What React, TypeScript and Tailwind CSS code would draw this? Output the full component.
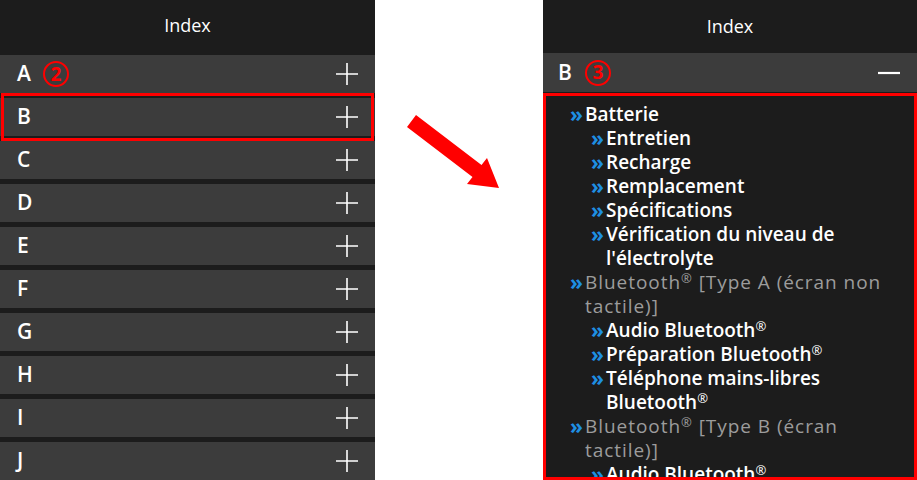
const letters = ["A", "B", "C", "D", "E", "F", "G", "H", "I", "J"];

type Entry = { level: 1 | 2; text: string; reg?: boolean; suffix?: string; muted?: boolean };

const entries: Entry[] = [
  { level: 1, text: "Batterie" },
  { level: 2, text: "Entretien" },
  { level: 2, text: "Recharge" },
  { level: 2, text: "Remplacement" },
  { level: 2, text: "Spécifications" },
  { level: 2, text: "Vérification du niveau de l'électrolyte" },
  { level: 1, text: "Bluetooth", reg: true, suffix: " [Type A (écran non tactile)]", muted: true },
  { level: 2, text: "Audio Bluetooth", reg: true },
  { level: 2, text: "Préparation Bluetooth", reg: true },
  { level: 2, text: "Téléphone mains-libres Bluetooth", reg: true },
  { level: 1, text: "Bluetooth", reg: true, suffix: " [Type B (écran tactile)]", muted: true },
  { level: 2, text: "Audio Bluetooth", reg: true },
];

const font = { fontFamily: "'Open Sans', 'Noto Sans', sans-serif" };

function Circled({ n }: { n: number }) {
  return (
    <span className="flex h-[26px] w-[26px] items-center justify-center rounded-full border-2 border-[#f00] text-[19px] font-bold leading-none text-[#f00]">
      {n}
    </span>
  );
}

function Plus() {
  return (
    <svg width="22" height="22" viewBox="0 0 22 22" className="shrink-0">
      <path d="M11 0v22M0 11h22" stroke="#fff" strokeWidth="1.6" />
    </svg>
  );
}

function Minus() {
  return (
    <svg width="22" height="22" viewBox="0 0 22 22" className="shrink-0">
      <path d="M0 11h22" stroke="#fff" strokeWidth="2.2" />
    </svg>
  );
}

function Header() {
  return (
    <div className="flex h-[53px] items-center justify-center bg-[#1c1c1c] text-[18px] text-white">
      Index
    </div>
  );
}

function Chevron() {
  return <span className="w-[15px] shrink-0 text-[21px] font-bold text-[#1e8fe3]">»</span>;
}

export default function App() {
  return (
    <div className="flex h-[480px] w-[917px] overflow-hidden bg-white" style={font}>
      {/* left panel: collapsed index */}
      <div className="flex w-[375px] flex-col gap-[5px] bg-[#1c1c1c]">
        <Header />
        {letters.map((l) => (
          <div key={l} className="relative -mt-[5px] first:mt-0">
            <div className="mt-[5px] flex h-[38px] items-center bg-[#3c3c3c] pl-[17px] pr-[17px] text-[21px] font-semibold text-white">
              <span>{l}</span>
              {l === "A" && (
                <span className="ml-[12px]">
                  <Circled n={2} />
                </span>
              )}
              <span className="ml-auto">
                <Plus />
              </span>
            </div>
            {l === "B" && (
              <div className="pointer-events-none absolute inset-x-[1px] -bottom-[5px] top-0 border-[3px] border-[#f00]" />
            )}
          </div>
        ))}
      </div>

      {/* arrow */}
      <div className="w-[168px] shrink-0">
        <svg width="168" height="480" viewBox="0 0 168 480">
          <polygon
            points="41,115 106.5,165 112,158 124,188 92,184 97.5,177 32,127"
            fill="#f00"
          />
        </svg>
      </div>

      {/* right panel: expanded B */}
      <div className="flex w-[374px] flex-col bg-[#1c1c1c]">
        <Header />
        <div className="flex h-[39px] items-center bg-[#3c3c3c] pl-[15px] pr-[17px] text-[21px] font-semibold text-white">
          <span>B</span>
          <span className="ml-[13px]">
            <Circled n={3} />
          </span>
          <span className="ml-auto">
            <Minus />
          </span>
        </div>
        <div className="mt-[1px] h-[387px] overflow-hidden border-[3px] border-[#f00] bg-[#1c1c1c] pl-[24px] pr-[20px] pt-[6px]">
          {entries.map((e, i) => (
            <div
              key={i}
              className={`flex text-[19px] leading-[24px] ${e.level === 2 ? "pl-[21px]" : ""} ${
                e.muted ? "font-normal tracking-[0.05em] text-[#9c9c9c]" : "font-semibold text-white"
              }`}
            >
              <Chevron />
              <span>
                {e.text}
                {e.reg && <sup className="text-[13px] font-normal">®</sup>}
                {e.suffix}
              </span>
            </div>
          ))}
        </div>
      </div>
    </div>
  );
}
